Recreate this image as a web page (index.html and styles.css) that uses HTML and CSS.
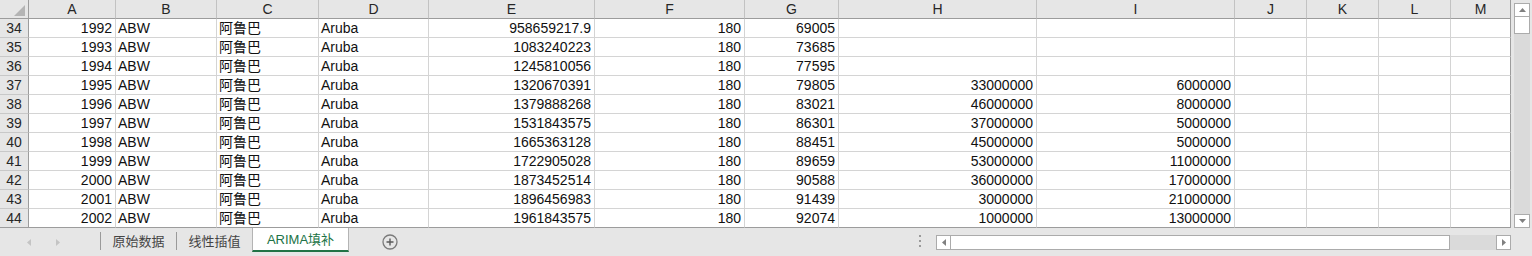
FILE: index.html
```html
<!DOCTYPE html>
<html lang="zh-CN">
<head>
    <meta charset="UTF-8">
    <title>ARIMA填补</title>
    <link rel="stylesheet" href="styles.css">
</head>
<body>

    <div class="sheet">
        <div class="grid">
            <!-- Cabeçalho de colunas -->
            <div class="row head">
                <div class="corner"><svg width="28" height="18"><polygon points="25,5 25,16 14,16" fill="#b4b4b4"/></svg></div>
                <div>A</div><div>B</div><div>C</div><div>D</div><div>E</div><div>F</div><div>G</div>
                <div>H</div><div>I</div><div>J</div><div>K</div><div>L</div><div class="edge">M</div>
            </div>

            <div class="row"><div class="rh">34</div><div class="n">1992</div><div>ABW</div><div>阿鲁巴</div><div>Aruba</div><div class="n">958659217.9</div><div class="n">180</div><div class="n">69005</div><div></div><div></div><div></div><div></div><div></div><div class="edge"></div></div>
            <div class="row"><div class="rh">35</div><div class="n">1993</div><div>ABW</div><div>阿鲁巴</div><div>Aruba</div><div class="n">1083240223</div><div class="n">180</div><div class="n">73685</div><div></div><div></div><div></div><div></div><div></div><div class="edge"></div></div>
            <div class="row"><div class="rh">36</div><div class="n">1994</div><div>ABW</div><div>阿鲁巴</div><div>Aruba</div><div class="n">1245810056</div><div class="n">180</div><div class="n">77595</div><div></div><div></div><div></div><div></div><div></div><div class="edge"></div></div>
            <div class="row"><div class="rh">37</div><div class="n">1995</div><div>ABW</div><div>阿鲁巴</div><div>Aruba</div><div class="n">1320670391</div><div class="n">180</div><div class="n">79805</div><div class="n">33000000</div><div class="n">6000000</div><div></div><div></div><div></div><div class="edge"></div></div>
            <div class="row"><div class="rh">38</div><div class="n">1996</div><div>ABW</div><div>阿鲁巴</div><div>Aruba</div><div class="n">1379888268</div><div class="n">180</div><div class="n">83021</div><div class="n">46000000</div><div class="n">8000000</div><div></div><div></div><div></div><div class="edge"></div></div>
            <div class="row"><div class="rh">39</div><div class="n">1997</div><div>ABW</div><div>阿鲁巴</div><div>Aruba</div><div class="n">1531843575</div><div class="n">180</div><div class="n">86301</div><div class="n">37000000</div><div class="n">5000000</div><div></div><div></div><div></div><div class="edge"></div></div>
            <div class="row"><div class="rh">40</div><div class="n">1998</div><div>ABW</div><div>阿鲁巴</div><div>Aruba</div><div class="n">1665363128</div><div class="n">180</div><div class="n">88451</div><div class="n">45000000</div><div class="n">5000000</div><div></div><div></div><div></div><div class="edge"></div></div>
            <div class="row"><div class="rh">41</div><div class="n">1999</div><div>ABW</div><div>阿鲁巴</div><div>Aruba</div><div class="n">1722905028</div><div class="n">180</div><div class="n">89659</div><div class="n">53000000</div><div class="n">11000000</div><div></div><div></div><div></div><div class="edge"></div></div>
            <div class="row"><div class="rh">42</div><div class="n">2000</div><div>ABW</div><div>阿鲁巴</div><div>Aruba</div><div class="n">1873452514</div><div class="n">180</div><div class="n">90588</div><div class="n">36000000</div><div class="n">17000000</div><div></div><div></div><div></div><div class="edge"></div></div>
            <div class="row"><div class="rh">43</div><div class="n">2001</div><div>ABW</div><div>阿鲁巴</div><div>Aruba</div><div class="n">1896456983</div><div class="n">180</div><div class="n">91439</div><div class="n">3000000</div><div class="n">21000000</div><div></div><div></div><div></div><div class="edge"></div></div>
            <div class="row last"><div class="rh">44</div><div class="n">2002</div><div>ABW</div><div>阿鲁巴</div><div>Aruba</div><div class="n">1961843575</div><div class="n">180</div><div class="n">92074</div><div class="n">1000000</div><div class="n">13000000</div><div></div><div></div><div></div><div class="edge"></div></div>
        </div>

        <!-- Barra de rolagem vertical -->
        <div class="vscroll">
            <div class="sbtn"><svg width="7" height="4"><polygon points="0,4 7,4 3.5,0" fill="#808080"/></svg></div>
            <div class="vthumb"></div>
            <div class="vtrack"></div>
            <div class="sbtn"><svg width="7" height="4"><polygon points="0,0 7,0 3.5,4" fill="#808080"/></svg></div>
        </div>
    </div>

    <!-- Abas das planilhas -->
    <div class="tabs">
        <div class="nav">
            <svg width="4" height="7"><polygon points="4,0 4,7 0,3.5" fill="#c4c4c4"/></svg>
            <svg width="4" height="7"><polygon points="0,0 0,7 4,3.5" fill="#c4c4c4"/></svg>
        </div>
        <div class="sep"></div>
        <div class="tab">原始数据</div>
        <div class="sep"></div>
        <div class="tab">线性插值</div>
        <div class="tab active">ARIMA填补</div>
        <div class="add">
            <svg width="16" height="16"><circle cx="8" cy="8" r="7" fill="none" stroke="#7a7a7a" stroke-width="1.3"/><path d="M8 4.5v7M4.5 8h7" stroke="#5a5a5a" stroke-width="1.4"/></svg>
        </div>
        <div class="spacer"></div>
        <div class="dots"><span></span><span></span><span></span></div>
        <div class="hscroll">
            <div class="sbtn"><svg width="4" height="7"><polygon points="4,0 4,7 0,3.5" fill="#808080"/></svg></div>
            <div class="hthumb"></div>
            <div class="htrack"></div>
            <div class="sbtn"><svg width="4" height="7"><polygon points="0,0 0,7 4,3.5" fill="#808080"/></svg></div>
        </div>
        <div class="corner-gap"></div>
    </div>

</body>
</html>
```

FILE: styles.css
```css
body {
    margin: 0;
    font-family: "Liberation Sans", "Noto Sans CJK SC", sans-serif;
    font-size: 14px;
    color: #111;
    background-color: #fff;
    overflow: hidden;
}
.sheet {
    display: flex;
    height: 228px;
}
.grid {
    width: 1511px;
}
.row {
    display: grid;
    grid-template-columns: 29px 87px 101px 102px 110px 166px 150px 94px 198px 198px 72px 72px 72px 60px;
    height: 19px;
}
.row > div {
    box-sizing: border-box;
    border-right: 1px solid #d4d4d4;
    border-bottom: 1px solid #d4d4d4;
    padding: 0 2px;
    line-height: 18px;
    white-space: nowrap;
    overflow: hidden;
}
.row .n {
    text-align: right;
    padding-right: 3px;
}
.row .edge {
    border-right-color: #9c9c9c;
}
.row.last > div {
    border-bottom-color: #9c9c9c;
}
.head > div {
    background-color: #e6e6e6;
    text-align: center;
    color: #262626;
    border-right-color: #c2c2c2;
    border-bottom-color: #9c9c9c;
}
.head .corner {
    padding: 0;
    border-right-color: #9c9c9c;
}
.corner svg {
    display: block;
}
.row .rh {
    background-color: #e6e6e6;
    text-align: center;
    color: #262626;
    border-right-color: #9c9c9c;
    border-bottom-color: #c8c8c8;
}
.vscroll {
    width: 21px;
    background-color: #e6e6e6;
    display: flex;
    flex-direction: column;
    padding: 3px 2px 0 3px;
    box-sizing: border-box;
}
.sbtn {
    box-sizing: border-box;
    width: 16px;
    height: 14px;
    border: 1px solid #ababab;
    background-color: #fff;
    display: flex;
    align-items: center;
    justify-content: center;
    flex-shrink: 0;
}
.vthumb {
    height: 17px;
    box-sizing: border-box;
    border: 1px solid #ababab;
    border-top: none;
    background-color: #fff;
}
.vtrack {
    flex: 1;
    background-color: #dadada;
}
.tabs {
    display: flex;
    height: 28px;
    background-color: #e6e6e6;
}
.nav {
    width: 100px;
    display: flex;
    align-items: center;
    padding-left: 27px;
    gap: 25px;
    box-sizing: border-box;
    height: 28px;
}
.sep {
    width: 1px;
    height: 18px;
    margin-top: 4px;
    background-color: #9a9a9a;
}
.tab {
    width: 75px;
    height: 24px;
    text-align: center;
    line-height: 26px;
    font-size: 13px;
    color: #444;
    font-family: "Noto Sans CJK SC", sans-serif;
}
.tab.active {
    width: 97px;
    box-sizing: border-box;
    background-color: #fff;
    border-left: 1px solid #b4b4b4;
    border-right: 1px solid #b4b4b4;
    border-bottom: 2px solid #217346;
    color: #217346;
    line-height: 24px;
    font-family: "Liberation Sans", "Noto Sans CJK SC", sans-serif;
}
.add {
    margin-left: 33px;
    padding-top: 6px;
}
.add svg {
    display: block;
}
.spacer {
    flex: 1;
}
.dots {
    display: flex;
    flex-direction: column;
    gap: 3px;
    padding-top: 7px;
    margin-right: 15px;
}
.dots span {
    width: 2px;
    height: 2px;
    background-color: #9a9a9a;
}
.hscroll {
    width: 575px;
    height: 15px;
    margin-top: 7px;
    display: flex;
}
.hscroll .sbtn {
    width: 15px;
    height: 15px;
}
.hthumb {
    width: 500px;
    margin-left: -1px;
    box-sizing: border-box;
    border: 1px solid #ababab;
    background-color: #fff;
}
.htrack {
    flex: 1;
    background-color: #dadada;
}
.corner-gap {
    width: 21px;
}
```
